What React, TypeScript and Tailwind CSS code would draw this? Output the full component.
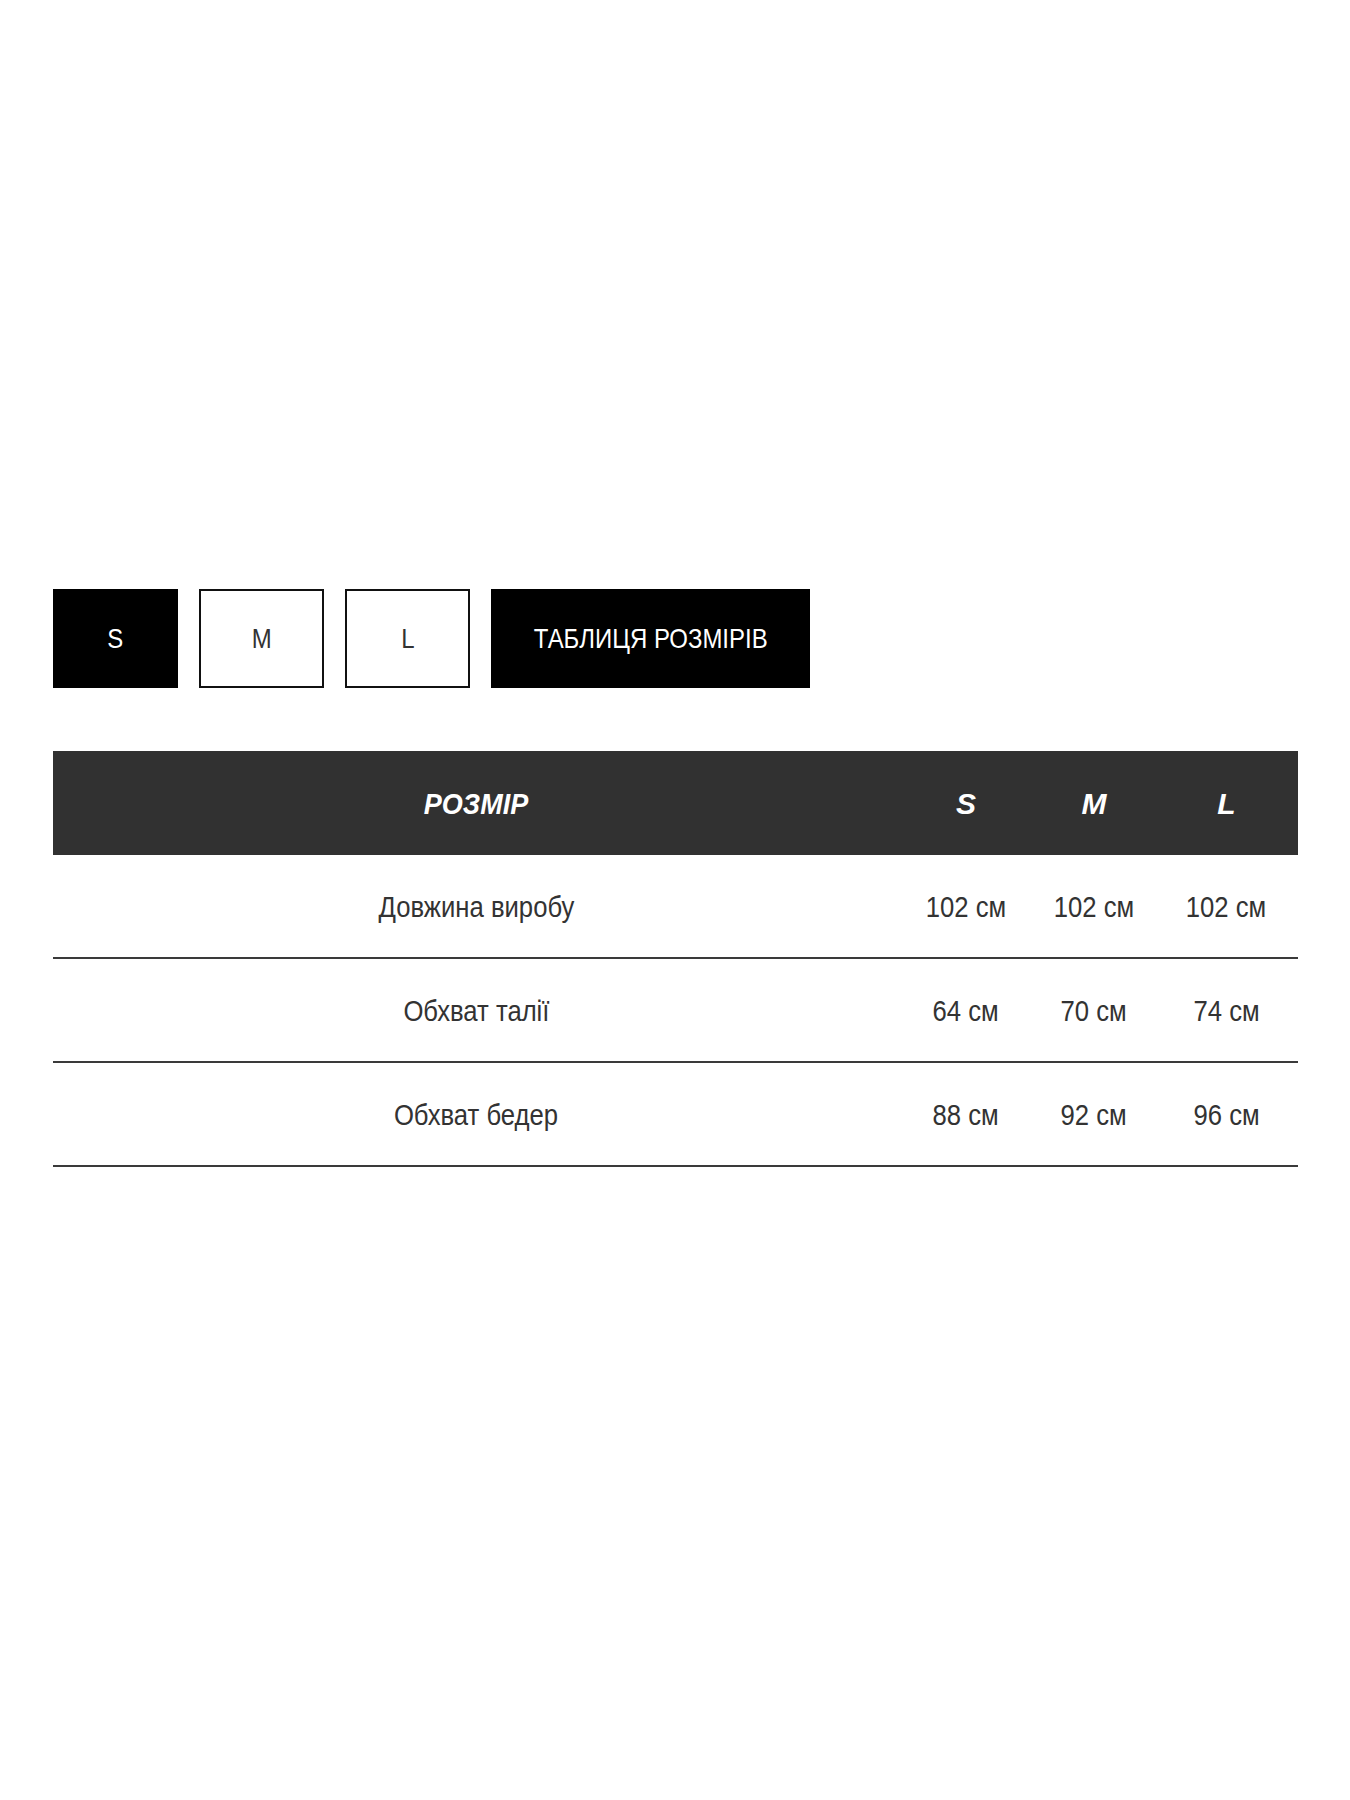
import React from "react";

const sizes = ["S", "M", "L"];

const rows = [
  { name: "Довжина виробу", values: ["102 см", "102 см", "102 см"] },
  { name: "Обхват талії", values: ["64 см", "70 см", "74 см"] },
  { name: "Обхват бедер", values: ["88 см", "92 см", "96 см"] },
];

// the source font is a narrow grotesk, Liberation Sans squeezed a bit stands in for it
const Narrow = ({ children }: { children: React.ReactNode }) => (
  <span className="inline-block scale-x-[0.855] whitespace-nowrap">{children}</span>
);

const App = () => {
  return (
    <div
      className="min-h-[1800px] bg-white pt-[589px] px-[53px]"
      style={{ fontFamily: '"Liberation Sans", Arial, sans-serif' }}
    >
      {/* size buttons */}
      <div className="flex gap-[21px]">
        {sizes.map((s) => (
          <button
            key={s}
            className={
              s === "S"
                ? "w-[125px] h-[99px] bg-black text-white text-[28px] flex items-center justify-center"
                : "w-[125px] h-[99px] bg-white text-[#333] text-[28px] border-2 border-[#111] flex items-center justify-center"
            }
          >
            <Narrow>{s}</Narrow>
          </button>
        ))}
        <button className="w-[319px] h-[99px] bg-black text-white text-[28px] flex items-center justify-center">
          <Narrow>ТАБЛИЦЯ РОЗМІРІВ</Narrow>
        </button>
      </div>

      {/* size table */}
      <div className="mt-[63px] w-[1245px]">
        <div className="grid grid-cols-[846px_134px_122px_143px] h-[104px] bg-[#313131] text-white text-[30px] font-bold italic items-center text-center">
          <div>
            <span className="inline-block scale-x-[0.9]">РОЗМІР</span>
          </div>
          {sizes.map((s) => (
            <div key={s}>{s}</div>
          ))}
        </div>
        {rows.map((r) => (
          <div
            key={r.name}
            className="grid grid-cols-[846px_134px_122px_143px] h-[104px] border-b-2 border-[#3a3a3a] text-[#333] text-[30px] items-center text-center"
          >
            <div>
              <Narrow>{r.name}</Narrow>
            </div>
            {r.values.map((v, i) => (
              <div key={i}>
                <Narrow>{v}</Narrow>
              </div>
            ))}
          </div>
        ))}
      </div>
    </div>
  );
};

export default App;
